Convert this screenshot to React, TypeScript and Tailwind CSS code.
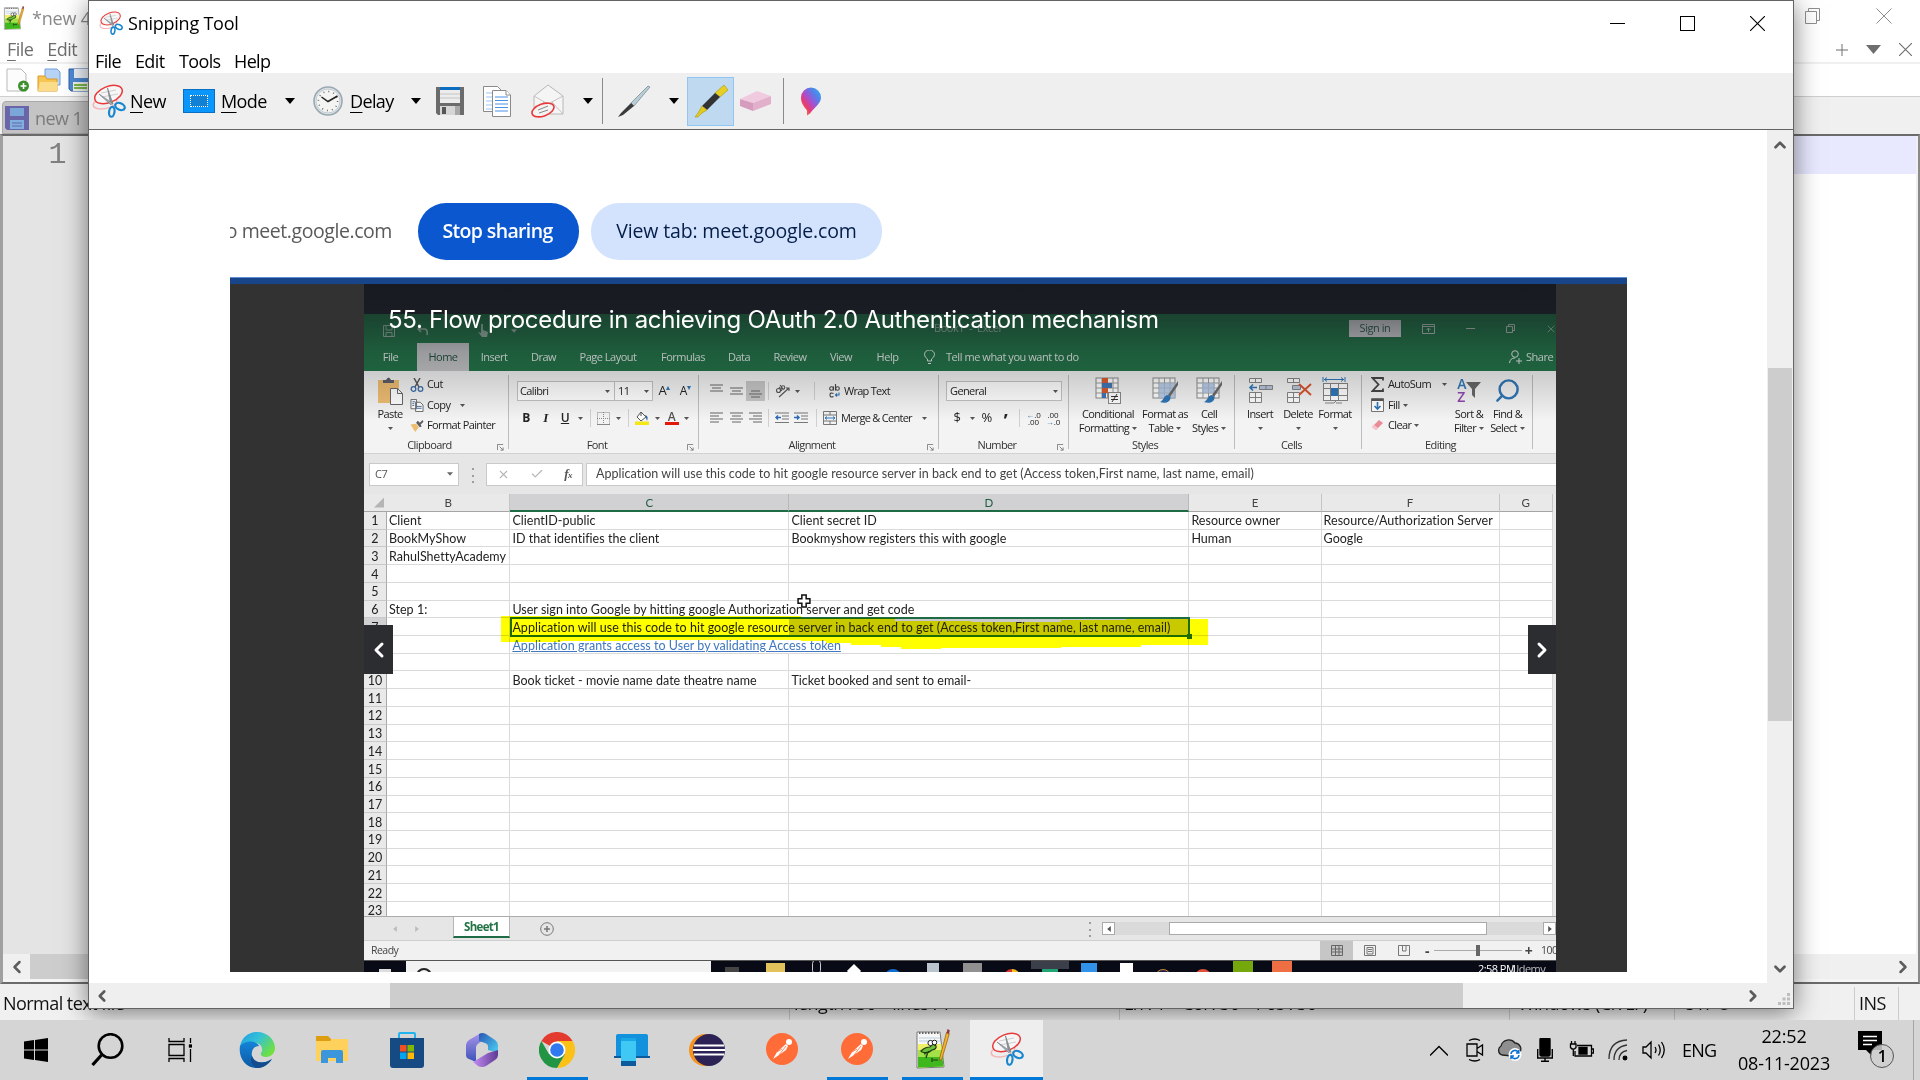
import React from "react";
import {
  ChevronLeft,
  ChevronRight,
  ChevronUp,
  ChevronDown,
  X,
  Check,
  Search,
} from "lucide-react";

type Kids = { children?: React.ReactNode; className?: string };

const Slot = ({ children, className = "" }: Kids) => (
  <div className={"flex h-full shrink-0 items-center justify-center whitespace-nowrap " + className}>{children}</div>
);

const Caret = ({ className = "" }: { className?: string }) => (
  <svg viewBox="0 0 10 6" className={"shrink-0 " + className} fill="currentColor">
    <path d="M0 0H10L5 6Z" />
  </svg>
);

const Scissors = ({ className = "" }: { className?: string }) => (
  <svg viewBox="0 0 34 34" className={"shrink-0 " + className} fill="none">
    <ellipse cx="13" cy="19" rx="12" ry="5.500" stroke="#f4b4b4" strokeWidth="1.400" transform="rotate(-12 13 19)" />
    <ellipse cx="16.500" cy="10.500" rx="14.500" ry="8" fill="#f6f6f6" stroke="#e8393b" strokeWidth="1.500" transform="rotate(-22 16.500 10.500)" />
    <path d="M9 9L24 6M10 13L26 10" stroke="#cfcfcf" />
    <path d="M15.500 4L21 20L18.500 20Z" fill="#8d949b" stroke="#70777d" strokeWidth=".6" />
    <path d="M7 10L21 19.500L18.500 20.500Z" fill="#a6adb3" stroke="#70777d" strokeWidth=".6" />
    <ellipse cx="28" cy="22.500" rx="5" ry="3.200" stroke="#1787cf" strokeWidth="2.200" transform="rotate(24 28 22.500)" />
    <ellipse cx="19.800" cy="27.800" rx="2.700" ry="5" stroke="#1787cf" strokeWidth="2.200" transform="rotate(8 19.800 27.800)" />
  </svg>
);

const Floppy = () => (
  <svg viewBox="0 0 28 28" className="h-7 w-7">
    <path d="M0 0H28V28H2L0 26Z" fill="#6b6b6b" />
    <rect x="4" y="0" width="20" height="16" fill="#ececec" />
    <rect x="4" y="0" width="20" height="3" fill="#0c6cc0" />
    <path d="M4 7H24M4 11H24" stroke="#c4c4c4" />
    <rect x="4" y="19" width="20" height="9" fill="#d6d6d6" />
    <rect x="6" y="20" width="4" height="7" fill="#565656" />
    <path d="M19 19H24V28H19Z" fill="#a8a8a8" />
  </svg>
);

const Clock = () => (
  <svg viewBox="0 0 30 30" className="h-[30px] w-[30px]">
    <circle cx="15" cy="15" r="14" fill="#dfe5e9" stroke="#9aa8b2" strokeWidth="1.600" />
    <circle cx="15" cy="15" r="12" fill="#f4f4f2" stroke="#c3ccd3" />
    <circle cx="15" cy="15" r="9.600" fill="none" stroke="#666" strokeWidth="1.500" strokeDasharray="1 4.030" />
    <path d="M8.500 11L15 15.500L24.500 10" fill="none" stroke="#222" strokeWidth="1.500" />
  </svg>
);

const Npp = ({ className = "" }: { className?: string }) => (
  <svg viewBox="0 0 34 40" className={"shrink-0 " + className}>
    <path d="M1 3H24L28 38L1 39Z" fill="#f7f7f7" stroke="#777" />
    <path d="M2 15H25.300L27.300 37.500L2 38.500Z" fill="#eef26a" />
    <path d="M2 21H26L27.300 37.500L2 38.500Z" fill="#a4e048" />
    <path d="M2 28H26.500L27.300 37.500L2 38.500Z" fill="#3fb81e" />
    <path d="M3 4H24" stroke="#666" strokeWidth="2" strokeDasharray="1.500 1.500" />
    <path d="M3 9H24M3 12H24" stroke="#b9cfe0" />
    <path d="M5 22Q9 18 14 18L17 15L20 17Q21 20 16 21Q12 25 6 23ZM8 25L12 23L10 29M17 31H22M16 29V33" fill="#6cc03a" stroke="#1d3b12" strokeWidth="1.200" />
    <circle cx="14.500" cy="14" r="2.600" fill="#fff" stroke="#222" />
    <circle cx="18.500" cy="13.500" r="2.300" fill="#fff" stroke="#222" />
    <path d="M30.500 3.500L33.300 4.800L26 29.500L23.500 32L23.800 28.500Z" fill="#f5b32c" stroke="#8a5a10" strokeWidth=".7" />
    <path d="M31.500 0L33.800 1.200L33 5L30.500 4Z" fill="#8e3b39" />
  </svg>
);

/* ---------- Notepad++ window behind ---------- */

const NotepadWindow = () => (
  <div className="absolute top-0 left-0 flex h-[1020px] w-[1920px] flex-col bg-white text-[18px] tracking-[-0.03em] text-[#6e6e6e]">
    <div className="flex h-8 items-center justify-between pl-[3px]">
      <div className="flex items-center gap-[7px] text-[#8a8a8a]">
        <Npp className="mt-1 h-6 w-[22px]" />
        <span className="pt-1 tracking-[-0.01em]">*new 4</span>
      </div>
      <div className="flex h-full items-center pr-px text-[#8f8f8f]">
        <Slot className="w-[71px]">
          <svg viewBox="0 0 16 16" className="h-4 w-4" fill="none" stroke="currentColor">
            <path d="M.500 3.500H11.500V15.500H.500ZM3.500 3.500V.500H14.500V12.500H11.500" />
          </svg>
        </Slot>
        <Slot className="w-[71px]">
          <svg viewBox="0 0 16 16" className="h-4 w-4" fill="none" stroke="currentColor">
            <path d="M.500 .500L15.500 15.500M15.500 .500L.500 15.500" />
          </svg>
        </Slot>
      </div>
    </div>
    <div className="flex h-[30px] items-center justify-between pr-[8px] pl-[7px]">
      <div className="flex gap-[14px] pt-1">
        <span><u className="decoration-1 underline-offset-4">F</u>ile</span>
        <span><u className="decoration-1 underline-offset-4">E</u>dit</span>
      </div>
      <div className="flex items-center gap-[18px] pt-[5px]">
        <svg viewBox="0 0 12 12" className="h-3 w-3" stroke="currentColor"><path d="M6 0V12M0 6H12" /></svg>
        <Caret className="h-[13px] w-[15px]" />
        <svg viewBox="0 0 12 12" className="h-[13px] w-[13px]" stroke="currentColor"><path d="M0 0L12 12M12 0L0 12" /></svg>
      </div>
    </div>
    <div className="flex h-[34px] items-center gap-[7px] border-t-2 border-[#f0f0f0] pl-1.5">
      <svg viewBox="0 0 24 24" className="h-6 w-6">
        <path d="M1 1H15L20 6V23H1Z" fill="#fcfcfc" stroke="#b9b9b9" />
        <circle cx="17.500" cy="18" r="5.500" fill="#3c8f2d" />
        <path d="M17.500 15V21M14.500 18H20.500" stroke="#fff" strokeWidth="1.600" />
      </svg>
      <svg viewBox="0 0 24 24" className="h-6 w-6">
        <path d="M8 1H20L23 4V17H8Z" fill="#b8d4f5" stroke="#6f9fdc" />
        <path d="M1 8H8L10 11H20V23H1Z" fill="#f7c552" stroke="#d99a2b" />
        <path d="M3 14H21L20 23H1Z" fill="#fbdc8a" />
      </svg>
      <svg viewBox="0 0 24 24" className="h-6 w-6">
        <path d="M1 1H23V23H3L1 21Z" fill="#4f8ad6" stroke="#2f62a8" />
        <rect x="6" y="1" width="14" height="9" fill="#eef4fb" />
        <rect x="5" y="14" width="15" height="9" fill="#f3f8ee" />
        <path d="M6 17H19M6 20H19" stroke="#7dbb4e" strokeWidth="2" />
      </svg>
    </div>
    <div className="flex h-[38px] border-t border-[#cfcfcf] bg-[#f0f0f0]">
      <div className="mt-1 ml-0.5 flex w-24 items-center gap-[6px] rounded-t border border-[#a9a9a9] bg-[#c4c4c4] pt-px pl-0.5 text-[18px] text-[#7c7c7c]">
        <svg viewBox="0 0 24 24" className="h-6 w-6">
          <path d="M0 0H24V24H2L0 22Z" fill="#6a64a8" />
          <rect x="5" y="2" width="14" height="8" fill="#7ba6d8" />
          <rect x="5" y="14" width="14" height="9" fill="#7fb0e0" />
          <path d="M7 17H17M7 20H17" stroke="#6a64a8" />
        </svg>
        new 1
      </div>
    </div>
    <div className="flex flex-1 flex-col border-t-2 border-r-2 border-b-2 border-l-[3px] border-[#6b6b6b] border-r-[#8a8a8a] border-l-[#a0a0a0]">
      <div className="flex flex-1">
        <div className="w-[85px] bg-[#e4e4e4] pt-[1px] pr-[22px] text-right font-['Liberation_Mono',monospace] text-[30px] leading-[36px] text-[#808080]">1</div>
        <div className="flex-1 border-r-2 border-[#f0f0f0]">
          <div className="h-[38px] bg-[#e8e8ff]" />
        </div>
      </div>
      <div className="flex h-[25px] items-center bg-[#f0f0f0]">
        <Slot className="w-[27px]"><ChevronLeft className="h-5 w-5 text-[#5d5d5d]" strokeWidth={3} /></Slot>
        <div className="h-full w-[1300px] bg-[#cdcdcd]" />
        <div className="flex-1" />
        <Slot className="w-[30px]"><ChevronRight className="h-5 w-5 text-[#5d5d5d]" strokeWidth={3} /></Slot>
      </div>
      <div className="h-[3px] bg-[#f5f5f5]" />
    </div>
    <div className="flex h-9 items-center bg-[#f0f0f0] pt-[3px] text-[18px] text-[#111]">
      <span className="w-[789px] pl-[3px]">Normal text file</span>
      <span className="flex h-full w-[330px] items-center border-l border-[#ccc] pl-1">length : 36&nbsp;&nbsp;&nbsp; lines : 1</span>
      <span className="flex h-full w-[390px] items-center border-l border-[#ccc] pl-1">Ln : 1&nbsp;&nbsp;&nbsp; Col : 36&nbsp;&nbsp;&nbsp; Pos : 36</span>
      <span className="flex h-full w-[165px] items-center border-l border-[#ccc] pl-2">Windows (CR LF)</span>
      <span className="flex h-full w-[180px] items-center border-l border-[#ccc] pl-2">UTF-8</span>
      <span className="flex h-full w-[45px] items-center border-x border-[#ccc] pl-1">INS</span>
    </div>
  </div>
);

/* ---------- Excel recording ---------- */

const tabs: [string, string][] = [
  ["File", "w-[53px]"],
  ["Home", "w-[52px] bg-[#c6c6c8] text-[#1d4f3a]"],
  ["Insert", "w-[50px]"],
  ["Draw", "w-[49px]"],
  ["Page Layout", "w-[80px]"],
  ["Formulas", "w-[70px]"],
  ["Data", "w-[42px]"],
  ["Review", "w-[60px]"],
  ["View", "w-[42px]"],
  ["Help", "w-[51px]"],
];

const Launcher = () => (
  <svg viewBox="0 0 8 8" className="h-[7px] w-[7px]" fill="none" stroke="#777"><path d="M.500 7V.500H7M3 3L7 7M7 4V7H4" /></svg>
);

const Group = ({ label, width, launcher, children }: { label: string; width: string; launcher?: boolean; children: React.ReactNode }) => (
  <div className={"relative flex shrink-0 flex-col " + width}>
    <div className="flex h-[66px]">{children}</div>
    <div className="flex h-[17px] items-center justify-center pt-0.5 pr-[14px] text-[#333]">{label}</div>
    {launcher && <div className="absolute right-[5px] bottom-[2px]"><Launcher /></div>}
    <div className="absolute top-[4px] right-0 h-[74px] w-px bg-[#bdbdbd]" />
  </div>
);

const Lines = ({ kind }: { kind: "l" | "c" | "r" | "top" | "mid" | "bot" }) => {
  const d = {
    l: "M0 1H13M0 4H9M0 7H13M0 10H9",
    c: "M0 1H13M2 4H11M0 7H13M2 10H11",
    r: "M0 1H13M4 4H13M0 7H13M4 10H13",
    top: "M0 0H13M2 3H11M0 6H13",
    mid: "M0 3H13M2 6H11M0 9H13",
    bot: "M2 6H11M0 9H13M2 12H11",
  }[kind];
  return <svg viewBox="0 0 13 12" className="h-3 w-[13px] overflow-visible" stroke="#666" strokeWidth="1.100"><path d={d} /></svg>;
};

const Indent = ({ flip }: { flip?: boolean }) => (
  <svg viewBox="0 0 14 12" className="h-3 w-[14px]" fill="none">
    <path d="M0 1H14M7 4H14M7 7H14M0 10.500H14" stroke="#777" />
    <path d={flip ? "M0 5.500H5M3 3.500L5 5.500L3 7.500" : "M6 5.500H1M3 3.500L1 5.500L3 7.500"} stroke="#2b6cb5" strokeWidth="1.500" />
  </svg>
);

const Arr = () => <Caret className="h-[3px] w-[5px] text-[#555]" />;
const Sep = () => <div className="h-[18px] w-px bg-[#d0d0d0]" />;

const TableIcon = ({ kind }: { kind: "cond" | "table" | "cell" }) => (
  <svg viewBox="0 0 27 27" className="h-[27px] w-[27px]" fill="none">
    <rect x="1" y="1" width="22" height="20" fill="#fff" stroke="#8a8a8a" />
    <path d="M1 6H23M1 11H23M1 16H23M7 1V21M12.500 1V21M18 1V21" stroke="#9a9a9a" />
    {kind === "cond" && (
      <>
        <path d="M7 1H13V6H7ZM7 11H13V16H7Z" fill="#d95a2b" />
        <path d="M7 6H17V11H7ZM7 16H11V21H7Z" fill="#3f76b5" />
        <rect x="13.500" y="15.500" width="12" height="11" fill="#fff" stroke="#888" />
        <path d="M16 19.500H23M16 22.500H23M22 17L17 25" stroke="#333" />
      </>
    )}
    {kind !== "cond" && (
      <>
        <path d={kind === "table" ? "M7 6H23V21H7Z" : "M6 6H19V16H6Z"} fill="#a9bfdf" fillOpacity=".8" />
        <path d="M26 4L16 18L18 20L26 8Z" fill="#6b6b6b" />
        <path d="M16 18C12 18 12 23 8 25C13 27 19 25 18.500 20Z" fill="#2e75b6" />
      </>
    )}
  </svg>
);

const CellsIcon = ({ kind }: { kind: "ins" | "del" | "fmt" }) => (
  <svg viewBox="0 0 27 27" className="h-[27px] w-[27px]" fill="none" stroke="#858585">
    {kind === "fmt" ? (
      <>
        <rect x="1.500" y="6.500" width="24" height="17" fill="#fff" />
        <path d="M1.500 11.500H25.500M1.500 18.500H25.500M8.500 6.500V23.500M16.500 6.500V23.500M3 26H12L14 24M14 26H20" />
        <rect x="9" y="11" width="7" height="8" fill="#2e75b6" stroke="none" />
        <path d="M2 2.500H22M1 0V5M23 0V5M5 .500L2.500 2.500L5 4.500M19 .500L21.500 2.500L19 4.500" stroke="#2e75b6" />
      </>
    ) : (
      <>
        <path d="M2.500 1.500H14.500V5.500H2.500ZM8.500 1.500V5.500M2.500 15.500H14.500V25.500H2.500ZM8.500 15.500V25.500M2.500 20.500H14.500" fill="#fff" />
        <path d={kind === "ins" ? "M12.500 8.500H25.500V12.500H12.500ZM19 8.500V12.500" : "M7.500 8.500H15.500V12.500H7.500Z"} fill="#b9c7dc" />
        {kind === "ins" ? (
          <path d="M10 10.500H3M6 7.500L3 10.500L6 13.500" stroke="#2e75b6" strokeWidth="1.600" />
        ) : (
          <path d="M14 7L26 18M26 7L14 18" stroke="#d9532c" strokeWidth="2" />
        )}
      </>
    )}
  </svg>
);

const BigButton = ({ icon, a, b, width, caretOnly }: { icon: React.ReactNode; a: string; b?: string; width: string; caretOnly?: boolean }) => (
  <div className={"flex shrink-0 flex-col items-center pt-[6px] whitespace-nowrap " + width}>
    <div className="flex h-[30px] items-start justify-center">{icon}</div>
    <span className="h-[14px] leading-[14px]">{a}</span>
    <span className="flex h-[14px] items-center gap-[3px] leading-[14px]">
      {!caretOnly && b}
      <Arr />
    </span>
  </div>
);

const Ribbon = () => (
  <div className="flex h-[83px] shrink-0 border-b border-[#d2d2d2] bg-[#f3f3f3] text-[11px] tracking-[-0.055em] text-[#222]">
    <Group label="Clipboard" width="w-[145px]" launcher>
      <BigButton
        width="w-[46px] pl-[6px]"
        caretOnly
        a="Paste"
        icon={
          <svg viewBox="0 0 27 29" className="h-[29px] w-[27px]">
            <rect x="1" y="3" width="21" height="23" fill="#eebd70" />
            <path d="M6 6V3H9Q11.500 -2 14 3H17V6Z" fill="#5c5c66" />
            <path d="M13.500 11.500H20.500L25.500 16.500V27.500H13.500Z" fill="#fff" stroke="#666" />
            <path d="M20.500 11.500V16.500H25.500" fill="none" stroke="#666" />
          </svg>
        }
      />
      <div className="flex flex-col pt-[3px]">
        <div className="flex h-[21px] items-center gap-[3px]">
          <svg viewBox="0 0 14 14" className="h-[14px] w-[14px]" fill="none">
            <path d="M4 0L9 9M10 0L5 9" stroke="#555" strokeWidth="1.500" />
            <circle cx="3.500" cy="11" r="2.300" stroke="#3c6ea8" strokeWidth="1.300" />
            <circle cx="10.500" cy="11" r="2.300" stroke="#3c6ea8" strokeWidth="1.300" />
          </svg>
          Cut
        </div>
        <div className="flex h-[20px] items-center gap-[3px]">
          <svg viewBox="0 0 14 14" className="h-[13px] w-[14px]" fill="#fff" stroke="#666">
            <path d="M.500 .500H6.500V10.500H.500ZM5.500 3.500H10.500L13.500 6.500V13.500H5.500Z" />
            <path d="M7 8H12M7 10H12M2 3H5M2 5H4M2 7H4" stroke="#3c6ea8" />
          </svg>
          Copy <span className="w-1" /><Arr />
        </div>
        <div className="flex h-[20px] items-center gap-[3px]">
          <svg viewBox="0 0 14 14" className="h-[13px] w-[14px]">
            <path d="M0 6L6 5L9 9L5 14Z" fill="#eebd70" />
            <path d="M6 4L8 2L10 4L13 1L14 3L11 6L12 8L10 9Z" fill="#5c5c5c" />
          </svg>
          Format Painter
        </div>
      </div>
    </Group>
    <Group label="Font" width="w-[190px]" launcher>
      <div className="flex flex-col pt-[10px] pl-2">
        <div className="flex h-5 items-center">
          <div className="flex h-full w-[98px] items-center justify-between border border-[#c3c3c3] bg-white px-[2px] pr-1">Calibri <Arr /></div>
          <div className="flex h-full w-[38px] items-center justify-between border border-l-0 border-[#c3c3c3] bg-white px-[3px]">11 <Arr /></div>
          <Slot className="w-[22px] text-[13px]">A<span className="mb-2 text-[8px] text-[#2e75b6]">▴</span></Slot>
          <Slot className="w-[20px] text-[12px]">A<span className="mb-2 text-[8px] text-[#2e75b6]">▾</span></Slot>
        </div>
        <div className="mt-[6px] flex h-[22px] items-center">
          <Slot className="w-[18px] text-[12px] font-bold">B</Slot>
          <Slot className="w-[21px] font-['Liberation_Serif',serif] text-[13px] font-bold italic">I</Slot>
          <Slot className="w-[18px] text-[12px] font-semibold underline">U</Slot>
          <Slot className="w-[12px]"><Arr /></Slot>
          <Slot className="w-[8px]"><Sep /></Slot>
          <Slot className="w-[19px]">
            <svg viewBox="0 0 13 13" className="h-[13px] w-[13px]" fill="none" stroke="#888"><path d="M.500 .500H12.500V12.500H.500ZM6.500 0V13M0 6.500H13" strokeDasharray="1 1" /><path d="M0 12.500H13" /></svg>
          </Slot>
          <Slot className="w-[11px]"><Arr /></Slot>
          <Slot className="w-[9px]"><Sep /></Slot>
          <Slot className="w-[18px]">
            <svg viewBox="0 0 14 14" className="h-[14px] w-[14px]" fill="none"><path d="M6 1L11 6L6 10L2 6ZM6 1V5" fill="#fff" stroke="#555" /><path d="M10 4Q14 5 12 10Z" fill="#2e6aa5" /><rect y="10.500" width="14" height="3.500" fill="#f5e616" /></svg>
          </Slot>
          <Slot className="w-[12px]"><Arr /></Slot>
          <Slot className="w-[17px]">
            <div className="flex flex-col items-center"><span className="h-[11px] text-[12px] leading-[11px] font-semibold text-[#555]">A</span><span className="h-[3px] w-[14px] bg-[#e3170a]" /></div>
          </Slot>
          <Slot className="w-[12px]"><Arr /></Slot>
        </div>
      </div>
    </Group>
    <Group label="Alignment" width="w-[240px]" launcher>
      <div className="flex flex-col pt-[10px] pl-[7px]">
        <div className="flex h-5 items-center">
          <Slot className="w-[20px]"><Lines kind="top" /></Slot>
          <Slot className="w-[20px]"><Lines kind="mid" /></Slot>
          <Slot className="w-[19px] bg-[#c6c6c6]"><Lines kind="bot" /></Slot>
          <Slot className="w-[7px]"><Sep /></Slot>
          <Slot className="w-[21px]">
            <svg viewBox="0 0 16 14" className="h-[14px] w-4" fill="none" stroke="#555" strokeWidth="1.100">
              <circle cx="3.500" cy="6.500" r="2" /><path d="M4 3L7 7" /><path d="M5 1L8.500 5.500" /><circle cx="8" cy="3.500" r="1.800" /><path d="M4 13L14 4M11 4H14V7" />
            </svg>
          </Slot>
          <Slot className="w-[8px]"><Arr /></Slot>
          <Slot className="w-[26px]"><Sep /></Slot>
          <Slot className="w-[14px]">
            <svg viewBox="0 0 11 14" className="h-[14px] w-[11px]" fill="none" stroke="#444" strokeWidth="1.100">
              <circle cx="2.500" cy="4.500" r="1.800" /><path d="M4.500 2.500V6.500M6.500 0V6.500" /><circle cx="8.500" cy="4.500" r="1.800" /><path d="M4.500 9.500Q1 8 1 11Q1 14 4.500 12.500" /><path d="M10 8.500V11H6.500M8 9.500L6.500 11L8 12.500" stroke="#2e75b6" />
            </svg>
          </Slot>
          <span className="pl-[3px] tracking-[-0.065em]">Wrap Text</span>
        </div>
        <div className="mt-[6px] flex h-[22px] items-center">
          <Slot className="w-[20px]"><Lines kind="l" /></Slot>
          <Slot className="w-[20px]"><Lines kind="c" /></Slot>
          <Slot className="w-[19px]"><Lines kind="r" /></Slot>
          <Slot className="w-[7px]"><Sep /></Slot>
          <Slot className="w-[19px]"><Indent /></Slot>
          <Slot className="w-[19px]"><Indent flip /></Slot>
          <Slot className="w-[12px]"><Sep /></Slot>
          <Slot className="w-[16px]">
            <svg viewBox="0 0 14 14" className="h-[14px] w-[14px]" fill="none" stroke="#777"><path d="M.500 .500H13.500V13.500H.500ZM.500 4H13.500M.500 10H13.500M7 .500V4M7 10V13.500" /><path d="M2 7H12M4 5.500L2 7L4 8.500M10 5.500L12 7L10 8.500" stroke="#2e75b6" /></svg>
          </Slot>
          <span className="w-[84px] pl-[3px] tracking-[-0.065em] whitespace-nowrap">Merge &amp; Center</span>
          <Arr />
        </div>
      </div>
    </Group>
    <Group label="Number" width="w-[130px]" launcher>
      <div className="flex flex-col pt-[10px] pl-[7px]">
        <div className="flex h-5 w-[116px] items-center justify-between border border-[#c3c3c3] bg-white px-[3px]">General <Arr /></div>
        <div className="mt-[6px] flex h-[22px] items-center text-[13px] font-medium">
          <Slot className="w-[22px]">$</Slot>
          <Slot className="w-[9px]"><Arr /></Slot>
          <Slot className="w-[19px]">%</Slot>
          <Slot className="w-[19px] pt-1 text-[18px] font-bold">’</Slot>
          <Slot className="w-[9px]"><Sep /></Slot>
          <Slot className="w-[19px] flex-col text-[8px] leading-[7px] tracking-normal"><span><span className="text-[#2e75b6]">←</span>.0</span><span>.00</span></Slot>
          <Slot className="w-[20px] flex-col text-[8px] leading-[7px] tracking-normal"><span>.00</span><span><span className="text-[#2e75b6]">→</span>.0</span></Slot>
        </div>
      </div>
    </Group>
    <Group label="Styles" width="w-[166px]">
      <BigButton width="w-[76px] pl-[2px]" icon={<TableIcon kind="cond" />} a="Conditional" b="Formatting" />
      <BigButton width="w-[40px]" icon={<TableIcon kind="table" />} a="Format as" b="Table" />
      <BigButton width="w-[48px]" icon={<TableIcon kind="cell" />} a="Cell" b="Styles" />
    </Group>
    <Group label="Cells" width="w-[127px]">
      <BigButton width="w-[50px]" icon={<CellsIcon kind="ins" />} a="Insert" caretOnly />
      <BigButton width="w-[26px]" icon={<CellsIcon kind="del" />} a="Delete" caretOnly />
      <BigButton width="w-[48px]" icon={<CellsIcon kind="fmt" />} a="Format" caretOnly />
    </Group>
    <Group label="Editing" width="w-[171px]">
      <div className="flex w-[87px] flex-col pt-[3px] pl-[9px]">
        <div className="flex h-[21px] items-center">
          <svg viewBox="0 0 13 15" className="mr-[4px] h-[15px] w-[13px]" fill="none" stroke="#444" strokeWidth="1.800"><path d="M12 3.500V1H1.500L7.500 7.500L1.500 14H12V11.500" /></svg>
          <span className="w-[54px]">AutoSum</span><Arr />
        </div>
        <div className="flex h-[20px] items-center">
          <svg viewBox="0 0 13 14" className="mr-[4px] h-[14px] w-[13px]" fill="none"><path d="M.500 .500H12.500V13.500H.500Z" fill="#fff" stroke="#777" /><path d="M.500 2H12.500" stroke="#555" strokeWidth="2" /><path d="M6.500 4V11M3.500 8L6.500 11L9.500 8" stroke="#2e75b6" strokeWidth="1.600" /></svg>
          <span className="pr-[3px]">Fill</span><Arr />
        </div>
        <div className="flex h-[20px] items-center">
          <svg viewBox="0 0 13 12" className="mr-[4px] h-[12px] w-[13px]"><path d="M1 8L8 1L12 4L5 11Z" fill="#ea8c98" /><path d="M1 8L3 6L7 9L5 11Z" fill="#f6c6cc" /></svg>
          <span className="pr-[3px]">Clear</span><Arr />
        </div>
      </div>
      <BigButton
        width="w-[40px]"
        a="Sort &amp;"
        b="Filter"
        icon={
          <div className="flex items-center">
            <span className="flex flex-col text-[14px] leading-[13px] font-semibold text-[#2e75b6]">A<span className="text-[#8e44ad]">Z</span></span>
            <svg viewBox="0 0 15 16" className="h-4 w-[15px]" fill="#666"><path d="M0 0H15L9 7V16L6 13V7Z" /></svg>
          </div>
        }
      />
      <BigButton width="w-[37px]" a="Find &amp;" b="Select" icon={<Search className="h-[27px] w-[27px] -scale-x-100 text-[#2e75b6]" strokeWidth={2.2} />} />
    </Group>
  </div>
);

const colWidths = {
  B: "w-[123.4px]",
  C: "w-[279px]",
  D: "w-[400px]",
  E: "w-[132.2px]",
  F: "w-[178px]",
  G: "w-[53.4px]",
};
type Col = keyof typeof colWidths;
const cols = Object.keys(colWidths) as Col[];

const data: Record<number, Partial<Record<Col, string>>> = {
  1: { B: "Client", C: "ClientID-public", D: "Client secret ID", E: "Resource owner", F: "Resource/Authorization Server" },
  2: { B: "BookMyShow", C: "ID that identifies the client", D: "Bookmyshow registers this with google", E: "Human", F: "Google" },
  3: { B: "RahulShettyAcademy" },
  6: { B: "Step 1:", C: "User sign into Google by hitting google Authorization server and get code" },
  7: { C: "Application will use this code to hit google resource server in back end to get (Access token,First name, last name, email)" },
  8: { C: "Application grants access to User by validating Access token" },
  10: { C: "Book ticket - movie name date theatre name", D: "Ticket booked and sent to email-" },
};

const Grid = () => (
  <div className="flex h-[422px] w-full shrink-0 flex-col overflow-hidden bg-[#e9e9ea] font-['Lato',sans-serif] text-[12.500px] tracking-[0.002em] text-[#222]">
    <div className="flex h-[18px] shrink-0 text-[11.500px] text-[#444]">
      <div className="flex w-[23px] shrink-0 items-end justify-end border-b border-[#a5a5a5] p-[3px]">
        <svg viewBox="0 0 10 10" className="h-[11px] w-[10px]" fill="#b5b5b5"><path d="M10 0V10H0Z" /></svg>
      </div>
      {cols.map((c) => (
        <div
          key={c}
          className={
            "flex shrink-0 items-center justify-center border-r pt-px " +
            colWidths[c] +
            (c === "C" || c === "D" ? " border-b-2 border-r-[#b8b8b8] border-b-[#1e6b45] bg-[#d1d1d3] text-[#1f5c43]" : " border-b border-r-[#c5c5c5] border-b-[#a5a5a5]")
          }
        >
          {c}
        </div>
      ))}
    </div>
    {Array.from({ length: 23 }, (_, i) => i + 1).map((r) => (
      <div key={r} className="flex h-[17.730px] shrink-0">
        <div className={"flex w-[23px] shrink-0 items-center justify-center border-r border-b border-r-[#a9a9a9] border-b-[#c9c9c9] pt-[3px] " + (r === 7 ? "bg-[#d1d1d3]" : "")}>
          {r}
        </div>
        {cols.map((c) => {
          const spill = c === "C" && r >= 6 && r <= 8;
          return (
            <div
              key={c}
              className={
                "relative flex shrink-0 items-center border-b border-b-[#dadada] bg-white pt-[3px] pl-[2px] whitespace-nowrap " +
                colWidths[c] +
                (spill ? " z-10" : " border-r border-r-[#dadada]") +
                (r === 8 && c === "C" ? " text-[#3f78c0] underline decoration-1" : "") +
                (r === 7 && c === "D" ? " bg-[#c9c9cb]!" : "")
              }
            >
              {data[r]?.[c]}
            </div>
          );
        })}
      </div>
    ))}
  </div>
);

const ExcelRecording = () => (
  <div className="relative flex h-[688px] w-[1192px] shrink-0 flex-col overflow-hidden bg-[#e6e6e7] font-['Open_Sans',sans-serif]">
    <div className="h-[30px] shrink-0 bg-[#20242b]" />
    <div className="flex h-[57px] shrink-0 flex-col bg-[#217346]">
      <div className="flex h-[29px] items-center text-[11px] tracking-[-0.04em] text-[#b8c5be]">
        <div className="flex w-[570px] shrink-0 items-center gap-[22px] pt-1 pl-[19px] opacity-80">
          <svg viewBox="0 0 12 12" className="h-3 w-3" fill="none" stroke="currentColor"><path d="M.500 .500H11.500V11.500H.500ZM3 .500V5H9V.500M3 11.500V7.500H9V11.500" /></svg>
          <svg viewBox="0 0 12 10" className="h-[10px] w-3" fill="none" stroke="currentColor" strokeWidth="1.500"><path d="M1 3H8Q11 4 10 9M4 0L1 3L4 6" /></svg>
          <span className="w-1" />
          <svg viewBox="0 0 12 14" className="h-[14px] w-3" fill="currentColor"><path d="M4 0H6V6L11 8L10 13H5L1 8L4 9Z" /></svg>
          <Caret className="h-1 w-[6px]" />
        </div>
        <span className="w-[415px] shrink-0 opacity-80">Book1&nbsp; - &nbsp;Excel</span>
        <div className="flex h-[17px] w-[52px] shrink-0 items-center justify-center bg-[#d4d4d6] text-[#2d5c48]">Sign in</div>
        <Slot className="w-[55px]">
          <svg viewBox="0 0 13 10" className="h-[10px] w-[13px]" fill="none" stroke="currentColor"><path d="M.500 .500H12.500V9.500H.500ZM.500 2.500H12.500M6.500 8V4M4.500 6L6.500 4L8.500 6" /></svg>
        </Slot>
        <Slot className="w-[29px]"><span className="h-px w-[9px] bg-current" /></Slot>
        <Slot className="w-[51px]">
          <svg viewBox="0 0 9 9" className="h-[9px] w-[9px]" fill="none" stroke="currentColor"><path d="M.500 2.500H6.500V8.500H.500ZM2.500 2.500V.500H8.500V6.500H6.500" /></svg>
        </Slot>
        <Slot className="w-[30px]"><X className="h-3 w-3" strokeWidth={1.5} /></Slot>
      </div>
      <div className="flex h-[28px] items-center text-[11px] tracking-[-0.045em] text-[#e6eeea]">
        {tabs.map(([t, w]) => (
          <Slot key={t} className={w}>{t}</Slot>
        ))}
        <Slot className="w-[33px]">
          <svg viewBox="0 0 11 15" className="h-[15px] w-[11px]" fill="none" stroke="currentColor"><path d="M3.500 11V9Q.500 7 .500 4.500A5 4.500 0 0 1 10.500 4.500Q10.500 7 7.500 9V11ZM4 13.500H7" /></svg>
        </Slot>
        <span className="w-[563px] shrink-0 tracking-[-0.04em]">Tell me what you want to do</span>
        <svg viewBox="0 0 13 14" className="mr-1 h-[14px] w-[13px] shrink-0" fill="none" stroke="currentColor"><circle cx="6" cy="4" r="3.300" /><path d="M.500 13Q1 8 6 8M7 11H13M10 8V14" /></svg>
        Share
      </div>
    </div>
    <Ribbon />
    <div className="flex h-[40px] shrink-0 items-center bg-[#e6e6e7]">
      <div className="ml-[5px] flex h-[23px] w-[90px] items-center justify-between border border-[#c9c9c9] bg-white px-[5px] text-[11px] tracking-[-0.04em] text-[#555]">C7 <Caret className="h-1 w-[6px] text-[#666]" /></div>
      <Slot className="w-[27px] text-[#999]">⋮</Slot>
      <div className="flex h-[23px] w-[97px] items-center justify-around border border-[#c9c9c9] bg-white text-[#b5b5b5]">
        <X className="h-[13px] w-[13px]" />
        <Check className="h-[14px] w-[14px]" />
        <span className="font-['Liberation_Serif',serif] text-[13px] font-bold text-[#555] italic">f<span className="text-[9px]">x</span></span>
      </div>
      <div className="ml-[3px] flex h-[23px] flex-1 items-center border border-r-0 border-[#c9c9c9] bg-white pt-px pl-[9px] font-['Lato',sans-serif] text-[12.500px] tracking-[0.002em] whitespace-nowrap text-[#444]">
        {data[7].C}
      </div>
    </div>
    <Grid />
    <div className="flex h-[24px] shrink-0 items-center border-t border-[#ababab] text-[#bbb]">
      <div className="flex w-[89px] shrink-0 justify-center gap-[16px] pr-[6px]">
        <Caret className="h-1 w-[6px] rotate-90" /><Caret className="h-1 w-[6px] -rotate-90" />
      </div>
      <div className="flex h-[21px] w-[57px] shrink-0 items-center justify-center self-start border-x border-b-2 border-[#b5b5b5] border-b-[#1e6b45] bg-white pt-px text-[11.500px] font-bold tracking-[-0.06em] text-[#217346]">Sheet1</div>
      <Slot className="w-[73px]">
        <svg viewBox="0 0 14 14" className="h-[14px] w-[14px]" fill="none" stroke="#777"><circle cx="7" cy="7" r="6.300" /><path d="M7 4V10M4 7H10" strokeWidth="1.500" /></svg>
      </Slot>
      <Slot className="ml-[497px] w-[19px] text-[#999]">⋮</Slot>
      <div className="ml-[3px] flex h-[13px] w-[454px] shrink-0 items-stretch bg-[#dadada]">
        <span className="flex w-[13px] items-center justify-center border border-[#aaa] bg-white"><Caret className="h-1 w-[6px] rotate-90 text-[#555]" /></span>
        <span className="ml-[54px] w-[318px] border border-[#aaa] bg-white" />
        <span className="flex-1" />
        <span className="flex w-[13px] items-center justify-center border border-[#aaa] bg-white"><Caret className="h-1 w-[6px] -rotate-90 text-[#555]" /></span>
      </div>
    </div>
    <div className="flex h-[20px] shrink-0 items-center border-t border-[#cfcfcf] bg-[#f1f1f1] text-[10.500px] tracking-[-0.05em] text-[#444]">
      <span className="w-[956px] shrink-0 pl-[7px]">Ready</span>
      <Slot className="w-[33px] bg-[#c6c6c6]">
        <svg viewBox="0 0 12 11" className="h-[11px] w-3" fill="none" stroke="#666"><path d="M.500 .500H11.500V10.500H.500ZM4.500 0V11M8 0V11M0 4H12M0 7H12" /></svg>
      </Slot>
      <Slot className="w-[34px]">
        <svg viewBox="0 0 12 11" className="h-[11px] w-3" fill="none" stroke="#777"><path d="M.500 .500H11.500V10.500H.500ZM3 2.500H9V9H3ZM4 4.500H8M4 6.500H8" /></svg>
      </Slot>
      <Slot className="w-[33px]">
        <svg viewBox="0 0 12 11" className="h-[11px] w-3" fill="none" stroke="#777"><path d="M.500 .500H11.500V10.500H.500ZM4.500 0V6H8V0" /></svg>
      </Slot>
      <Slot className="w-[14px] text-[14px] font-bold">-</Slot>
      <div className="flex h-full w-[88px] shrink-0 items-center justify-center bg-[linear-gradient(#aaa,#aaa)] bg-[size:100%_1px] bg-center bg-no-repeat"><span className="h-[11px] w-[4px] bg-[#666]" /></div>
      <Slot className="w-[13px] text-[14px] font-bold">+</Slot>
      <span className="pl-[6px]">100</span>
    </div>
    <div className="flex h-[12px] shrink-0 items-start overflow-hidden border-t border-[#555] bg-[#080b16]">
      <Slot className="w-[42px]"><span className="mt-[9px] h-1 w-[12px] bg-[#ddd]" /></Slot>
      <div className="flex h-full w-[305px] shrink-0 items-start overflow-hidden bg-[#f2f2f2] pt-[7px] pl-[10px]"><span className="h-4 w-4 rounded-full border-2 border-[#222]" /></div>
      <div className="flex h-full items-start pt-[8px]">
        <Slot className="w-[42px]"><span className="mt-1 h-3 w-[14px] bg-[#444]" /></Slot>
        <Slot className="w-[44px]"><span className="h-4 w-[19px] bg-[#e3c25c]" /></Slot>
        <Slot className="w-[38px]"><span className="-mt-2 h-4 w-[9px] rounded-full border border-[#ccc]" /></Slot>
        <Slot className="w-[38px]"><span className="h-2.5 w-2.5 rotate-45 bg-white" /></Slot>
        <Slot className="w-[40px] items-start"><span className="h-4 w-4 shrink-0 rounded-full bg-[#0d6fd1]" /></Slot>
        <Slot className="w-[40px]"><span className="h-4 w-3 bg-[#b9c4cc]" /></Slot>
        <Slot className="w-[39px]"><span className="h-4 w-[19px] bg-[#909090]" /></Slot>
        <Slot className="w-[39px] items-start"><span className="h-4 w-4 rounded-full bg-[conic-gradient(#f4c022_40%,#1a62b8_40%,#1a62b8_70%,#d9362b_70%)]" /></Slot>
        <Slot className="-mt-2 h-4 w-[38px] items-start bg-[#3a3f49] pt-2"><span className="h-4 w-4 bg-[#22a574]" /></Slot>
        <Slot className="w-[40px]"><span className="h-4 w-4 bg-[#3291e8]" /></Slot>
        <Slot className="w-[34px]"><span className="h-4 w-[13px] bg-white" /></Slot>
        <Slot className="w-[40px] items-start"><span className="h-4 w-4 rounded-full border border-[#c98a35] bg-[#251b47]" /></Slot>
        <Slot className="w-[40px] items-start"><span className="h-4 w-4 rounded-full bg-[#e0503a]" /></Slot>
        <Slot className="w-[39px]"><span className="-mt-1 h-4 w-[20px] bg-[#74a80b]" /></Slot>
        <Slot className="w-[39px]"><span className="-mt-1 h-4 w-[20px] bg-[#ef6f45]" /></Slot>
      </div>
    </div>
    <span className="absolute top-[677px] left-[1114px] z-10 text-[11px] tracking-[-0.05em] whitespace-nowrap text-white">2:58 PM<span className="-ml-1 opacity-70">Udemy</span></span>

    <div className="absolute top-0 left-0 h-[136px] w-full bg-gradient-to-b from-[#14171c]/75 via-[#14171c]/25 to-transparent" />
    <div className="absolute top-[18px] left-[24px] font-['Inter',sans-serif] text-[24px] tracking-[-0.012em] whitespace-nowrap text-white">
      55. Flow procedure in achieving OAuth 2.0 Authentication mechanism
    </div>

    <div className="absolute top-[333px] left-[146px] z-20 h-[20px] w-[680px] border-2 border-[#1e6b45]" />
    <div className="absolute top-[350px] left-[823px] z-20 h-[5px] w-[5px] bg-[#1e6b45]" />
    <svg viewBox="0 0 707 33" className="absolute top-[332px] left-[137px] z-20 h-[33px] w-[707px] mix-blend-multiply" fill="#ffff00">
      <path d="M0 0H300V2H394V5H470V6H560V4H625V3H707V29H640V31H560V32H440V33H400V31H380V29H350V27H325V25H300V24H130V25H60V26H0Z" />
    </svg>
    <svg viewBox="0 0 13 13" className="absolute top-[310px] left-[433px] z-20 h-[14px] w-[14px]" fill="#fff" stroke="#111" strokeWidth="1.400">
      <path d="M4.500 1H8.500V4.500H12V8.500H8.500V12H4.500V8.500H1V4.500H4.500Z" />
    </svg>
    <div className="absolute top-[341px] left-0 z-30 flex h-[49px] w-[29px] items-center justify-center bg-[#2b2d30] text-white">
      <ChevronLeft className="h-6 w-6" strokeWidth={3} />
    </div>
    <div className="absolute top-[341px] right-0 z-30 flex h-[49px] w-[28px] items-center justify-center bg-[#2b2d30] text-white">
      <ChevronRight className="h-6 w-6" strokeWidth={3} />
    </div>
  </div>
);

/* ---------- Snipping Tool window ---------- */

const SnippingWindow = () => (
  <div className="absolute top-0 left-[88px] flex h-[1009px] w-[1706px] flex-col border border-[#646464] bg-white text-[18px] tracking-[-0.035em] text-black shadow-[0_4px_24px_rgba(0,0,0,0.5)]">
    <div className="flex h-11 items-center justify-between pl-2.5">
      <div className="flex items-center gap-[5px] tracking-[-0.013em]"><Scissors className="h-6 w-6" />Snipping Tool</div>
      <div className="flex h-full items-center">
        <Slot className="w-[69px]"><span className="h-px w-[15px] bg-black" /></Slot>
        <Slot className="w-[70px]"><span className="h-[15px] w-[15px] border border-black" /></Slot>
        <Slot className="w-[71px]">
          <svg viewBox="0 0 16 16" className="h-[15px] w-[15px]" stroke="#000" strokeWidth="1.200"><path d="M0 0L16 16M16 0L0 16" /></svg>
        </Slot>
      </div>
    </div>
    <div className="flex h-7 items-center pt-[4px] pl-[6px]">
      <span className="w-10">File</span><span className="w-[44px]">Edit</span><span className="w-[55px]">Tools</span><span>Help</span>
    </div>
    <div className="flex h-[57px] items-center border-b border-[#646464] bg-[#efefef] pl-[3px]">
      <Scissors className="h-[34px] w-[34px]" />
      <span className="w-[52px] pl-[4px]"><u className="decoration-1 underline-offset-4">N</u>ew</span>
      <div className="ml-[5px] flex h-6 w-8 items-center justify-center border border-[#0a6fc2] bg-[#0a96fb]"><span className="h-3 w-[18px] border border-dotted border-white bg-[#1181d6]" /></div>
      <span className="w-[69px] pl-[6px]"><u className="decoration-1 underline-offset-4">M</u>ode</span>
      <Caret className="h-[6px] w-3" />
      <span className="w-[17px]" />
      <Clock />
      <span className="w-[67px] pl-[7px]"><u className="decoration-1 underline-offset-4">D</u>elay</span>
      <Caret className="h-[6px] w-3" />
      <span className="w-[14px]" />
      <Floppy />
      <svg viewBox="0 0 28 31" className="ml-[19px] h-[31px] w-7" fill="#fff" stroke="#8a8a8a">
        <path d="M.500 .500H14.500L18.500 4.500V25.500H.500Z" />
        <path d="M3 7H9M3 11H9M3 15H9M3 19H9M3 23H9" stroke="#9fc3f2" />
        <path d="M9.500 4.500H23L27.500 9V30.500H9.500Z" /><path d="M23 4.500V9H27.500" />
        <path d="M12 11H25M12 14.500H25M12 18H25M12 21.500H25M12 25H25" stroke="#4a8fe8" />
      </svg>
      <svg viewBox="0 0 33 34" className="ml-5 h-[34px] w-[33px]" fill="none">
        <path d="M3 12L17 1L32 12V30H3Z" fill="#f5f5f5" stroke="#b8b8b8" />
        <path d="M3 12L17 20L32 12M3 30L13 18M32 30L21 18" stroke="#c3c3c3" />
        <ellipse cx="12" cy="26" rx="11.500" ry="6" fill="#f3f3f3" stroke="#e8393b" strokeWidth="1.600" transform="rotate(-20 12 26)" />
        <path d="M7 26L17 22M8 29L17 26" stroke="#888" />
      </svg>
      <span className="w-[18px]" />
      <Caret className="h-[6px] w-3" />
      <span className="ml-[8px] h-[46px] w-px bg-[#8a8a8a]" />
      <svg viewBox="0 0 34 34" className="ml-[14px] h-[34px] w-[34px]">
        <path d="M31 2L14 19L17 22L33 3Z" fill="#b9cdd6" stroke="#7d8f98" strokeWidth=".8" />
        <path d="M14 19L4 29L1 33L6 31L17 22Z" fill="#3a3a3a" />
      </svg>
      <span className="w-[17px]" />
      <Caret className="h-[6px] w-3" />
      <div className="ml-[7px] flex h-[49px] w-[47px] items-center justify-center border border-[#8fc6f3] bg-[#bfdaf0]">
        <svg viewBox="0 0 34 34" className="h-[34px] w-[34px]">
          <path d="M30 1L34 6L26 13L21 9Z" fill="#e6cf22" stroke="#a8961a" strokeWidth=".6" />
          <path d="M21 9L26 13L13 26L8 22Z" fill="#333" />
          <path d="M8 22L13 26L8 29L4 33L1 33L4 29Z" fill="#e3cb1c" stroke="#a8961a" strokeWidth=".6" />
        </svg>
      </div>
      <svg viewBox="0 0 33 20" className="ml-[5px] h-5 w-[33px]">
        <path d="M1 8L18 0L32 5L14 12Z" fill="#f0cbe0" /><path d="M1 8L14 12V20L1 15Z" fill="#d59cbd" /><path d="M14 12L32 5V13L14 20Z" fill="#e3b0cc" />
      </svg>
      <span className="ml-[11px] h-[46px] w-px bg-[#8a8a8a]" />
      <svg viewBox="0 0 20 28" className="ml-[17px] h-[29px] w-5">
        <defs>
          <linearGradient id="balloon" x1="1" y1="0" x2="0" y2="1">
            <stop offset="0" stopColor="#21b8f2" /><stop offset=".3" stopColor="#5b7be8" /><stop offset=".5" stopColor="#a84fd0" /><stop offset=".7" stopColor="#ea3a6e" /><stop offset="1" stopColor="#f9a51f" />
          </linearGradient>
        </defs>
        <path d="M10 0A10 10 0 0 1 20 10C20 16 14 19 9 26L6 28L6 23C3 19 0 16 0 10A10 10 0 0 1 10 0Z" fill="url(#balloon)" />
      </svg>
    </div>
    <div className="flex h-[853px]">
      <div className="flex w-[1678px] flex-col pl-[141px]">
        <div className="flex h-[147px] items-center pt-[55px] text-[19.500px]">
          <div className="flex w-[162px] justify-end overflow-hidden tracking-[-0.022em] whitespace-nowrap text-[#5a5a5a]"><span>to meet.google.com</span></div>
          <div className="ml-[26px] flex h-[57px] w-[161px] items-center justify-center rounded-[28px] bg-[#0b57d0] pr-0.5 font-semibold whitespace-nowrap text-white">Stop sharing</div>
          <div className="ml-3 flex h-[57px] w-[291px] items-center justify-center rounded-[28px] bg-[#d3e3fd] font-medium tracking-[-0.008em] whitespace-nowrap text-[#041e49]">View tab: meet.google.com</div>
        </div>
        <div className="h-[7px] w-[1397px] border-t border-[#5f8fd0] bg-[#18458a]" />
        <div className="flex h-[688px] w-[1397px] bg-[#323232]">
          <div className="w-[134px]" />
          <ExcelRecording />
        </div>
      </div>
      <div className="flex flex-1 flex-col items-center bg-[#efefef] text-[#5a5a5a]">
        <Slot className="h-[30px]! w-full"><ChevronUp className="h-[18px] w-[18px]" strokeWidth={3.5} /></Slot>
        <div className="mt-[208px] h-[353px] w-6 bg-[#cdcdcd]" />
        <div className="flex-1" />
        <Slot className="h-[28px]! w-full"><ChevronDown className="h-[18px] w-[18px]" strokeWidth={3.5} /></Slot>
      </div>
    </div>
    <div className="flex flex-1 items-center bg-[#efefef] text-[#5a5a5a]">
      <Slot className="w-[26px]"><ChevronLeft className="h-[18px] w-[18px]" strokeWidth={3.5} /></Slot>
      <div className="ml-[275px] h-full w-[1073px] bg-[#cdcdcd]" />
      <div className="flex-1" />
      <Slot className="mr-[26px] w-[28px]"><ChevronRight className="h-[18px] w-[18px]" strokeWidth={3.5} /></Slot>
    </div>
    <svg viewBox="0 0 12 12" className="absolute right-[3px] bottom-[3px] h-3 w-3" fill="#bdbdbd">
      <path d="M9 0H12V3H9ZM9 4.500H12V7.500H9ZM9 9H12V12H9ZM4.500 4.500H7.500V7.500H4.500ZM4.500 9H7.500V12H4.500ZM0 9H3V12H0Z" />
    </svg>
  </div>
);

/* ---------- Taskbar ---------- */

const Postman = () => (
  <svg viewBox="0 0 32 32" className="h-8 w-8" fill="none">
    <circle cx="16" cy="16" r="16" fill="#ff6c37" />
    <circle cx="23" cy="9" r="3" fill="#fff" />
    <path d="M20 11L11 19L7 26L13 22L20 17L22 13Z" fill="#fff" />
    <path d="M11 19L16 16M13 22L20 13" stroke="#ff6c37" strokeWidth=".8" />
  </svg>
);

const TaskItem = ({ children, className = "", open, active }: Kids & { open?: boolean; active?: boolean }) => (
  <div className={"flex h-full shrink-0 flex-col items-center " + className + (active ? " bg-[#eeeeee]" : "")}>
    <div className="flex flex-1 items-center">{children}</div>
    <div className={"h-[3px] " + (active ? "w-full bg-[#0078d7]" : open ? "w-[61px] bg-[#0078d7]" : "w-0")} />
  </div>
);

const Taskbar = () => (
  <div className="absolute top-[1020px] left-0 flex h-[60px] w-[1920px] items-center bg-[#d5d5d6] text-[18px] tracking-[-0.035em] text-black">
    <TaskItem className="w-[72px]">
      <svg viewBox="0 0 24 24" className="mt-[3px] h-6 w-6"><path d="M0 3.500L10 2V11.500H0ZM11 1.900L24 0V11.500H11ZM0 12.500H10V22L0 20.500ZM11 12.500H24V24L11 22.100Z" /></svg>
    </TaskItem>
    <TaskItem className="w-[71px]">
      <svg viewBox="0 0 33 33" className="mt-[2px] h-[33px] w-[33px]" fill="none" stroke="#000" strokeWidth="2.600"><circle cx="19.500" cy="13" r="11.800" /><path d="M11 21.500L1.500 32" strokeWidth="3.200" /></svg>
    </TaskItem>
    <TaskItem className="w-[74px]">
      <svg viewBox="0 0 24 24" className="mt-[2px] h-6 w-6" fill="none" stroke="#000" strokeWidth="1.300">
        <path d="M1 0V3.500H16V0M1 24V20.500H16V24M1 6.500H16V17.500H1ZM22.500 0V5M22.500 11V24" /><rect x="21.500" y="7" width="2" height="2" fill="#000" />
      </svg>
    </TaskItem>
    <TaskItem className="w-[79px]">
      <svg viewBox="0 0 36 36" className="mt-[2px] h-9 w-9">
        <defs>
          <linearGradient id="edgeTop" x1="0" y1="0" x2="1" y2=".6"><stop offset="0" stopColor="#1b9de2" /><stop offset=".5" stopColor="#35c1d8" /><stop offset="1" stopColor="#6fe040" /></linearGradient>
          <linearGradient id="edgeLow" x1="0" y1="0" x2="0" y2="1"><stop offset="0" stopColor="#1583d8" /><stop offset="1" stopColor="#0c59a4" /></linearGradient>
        </defs>
        <path d="M1 14C3 5 10 0 18 0C29 0 36 8 36 16C36 22 31 25 27 25C23 25 21 23 22 21C25 17 22 11 16 11C9 11 4 13 1 14Z" fill="url(#edgeTop)" />
        <path d="M1 14C6 8 17 8 20 14C14 14 12 20 13 24C15 31 24 33 33 27C29 33 24 36 18 36C7 36-1 26 1 14Z" fill="url(#edgeLow)" />
        <path d="M13 24C15 31 24 33 33 27C28 34 22 36 18 36C12 33 11 28 13 24Z" fill="#134b8d" />
      </svg>
    </TaskItem>
    <TaskItem className="w-[71px]">
      <svg viewBox="0 0 32 27" className="mt-[2px] h-[27px] w-8">
        <path d="M0 0H12L15 3V6H0Z" fill="#dc9d10" /><path d="M0 5H14L16 3H32V25H0Z" fill="#fdd15c" />
        <path d="M5 27V16Q5 14 7 14H25Q27 14 27 16V27H20V22H12V27Z" fill="#3b96dc" />
      </svg>
    </TaskItem>
    <TaskItem className="w-[79px]">
      <svg viewBox="0 0 36 36" className="mt-[2px] h-9 w-9">
        <path d="M10 8V2Q10 1 11 1H25Q26 1 26 2V8" fill="none" stroke="#20b3ef" strokeWidth="2" />
        <path d="M1 6H35V33Q35 36 32 36H4Q1 36 1 33Z" fill="#154a83" />
        <path d="M11 13H17.500V19.500H11Z" fill="#f25022" /><path d="M18.500 13H25V19.500H18.500Z" fill="#7fba00" /><path d="M11 20.500H17.500V27H11Z" fill="#00a4ef" /><path d="M18.500 20.500H25V27H18.500Z" fill="#ffb900" />
      </svg>
    </TaskItem>
    <TaskItem className="w-[72px]">
      <svg viewBox="0 0 32 34" className="mt-[2px] h-[34px] w-8">
        <defs>
          <linearGradient id="mA" x1="0" y1="0" x2="0" y2="1"><stop offset="0" stopColor="#a892e8" /><stop offset="1" stopColor="#3a52b8" /></linearGradient>
          <linearGradient id="mB" x1="0" y1="0" x2="1" y2="1"><stop offset="0" stopColor="#2a56b5" /><stop offset="1" stopColor="#4ad3f4" /></linearGradient>
          <linearGradient id="mC" x1="0" y1="0" x2="1" y2="0"><stop offset="0" stopColor="#c58cf5" /><stop offset="1" stopColor="#5d3a92" /></linearGradient>
        </defs>
        <path d="M13 1L3 7Q0 9 0 12V22Q0 25 3 26L10 29V14Q10 12 13 10L19 6Z" fill="url(#mA)" />
        <path d="M13 1Q16-1 20 1L29 7Q32 9 32 12V20L22 17V13Q22 11 19 10L13 8Z" fill="url(#mB)" />
        <path d="M32 17V22Q32 25 29 27L20 33Q16 35 12 33L7 29L12 26L22 20Z" fill="url(#mC)" />
      </svg>
    </TaskItem>
    <TaskItem className="w-[78px]" open>
      <svg viewBox="0 0 36 36" className="mt-[2px] h-9 w-9">
        <path d="M18 18L2.400 9A18 18 0 0 1 33.600 9H18Z" fill="#e33b2e" /><path d="M18 18L33.600 9A18 18 0 0 1 18 36L25.800 22.500Z" fill="#fbc116" />
        <path d="M18 18L25.800 22.500L18 36A18 18 0 0 1 2.400 9L10.200 22.500Z" fill="#229544" /><path d="M18 9H33.600L25.800 22.500Z" fill="#fbc116" />
        <circle cx="18" cy="18" r="8.500" fill="#fff" /><circle cx="18" cy="18" r="6.800" fill="#3079ee" />
      </svg>
    </TaskItem>
    <TaskItem className="w-[72px]">
      <svg viewBox="0 0 36 32" className="mt-[2px] h-8 w-9">
        <path d="M2 2Q2 0 4 0H32Q34 0 34 2V22H2Z" fill="#1291dc" /><path d="M0 22H36V24H0Z" fill="#0b5b9c" /><path d="M7 4H22V30H7Z" fill="#3fc8f4" /><path d="M7 4H22V7H7Z" fill="#1aa5e6" /><path d="M7 27H22V32H7Z" fill="#0b5b9c" />
      </svg>
    </TaskItem>
    <TaskItem className="w-[77px]">
      <svg viewBox="0 0 36 32" className="mt-[2px] h-8 w-9">
        <circle cx="16" cy="16" r="16" fill="#f7941e" /><circle cx="20" cy="16" r="16" fill="#2c2255" />
        <path d="M5 11.500H35M4 16H36M5 20.500H35" stroke="#fff" strokeWidth="2" />
      </svg>
    </TaskItem>
    <TaskItem className="w-[74px]"><Postman /></TaskItem>
    <TaskItem className="w-[76px]" open><Postman /></TaskItem>
    <TaskItem className="w-[75px]" open><Npp className="h-10 w-[34px]" /></TaskItem>
    <TaskItem className="w-[73px]" active><Scissors className="h-10 w-[34px]" /></TaskItem>
    <div className="flex-1" />
    <svg viewBox="0 0 18 10" className="h-[11px] w-[18px]" fill="none" stroke="#000" strokeWidth="1.400"><path d="M0 10L9 1L18 10" /></svg>
    <svg viewBox="0 0 18 24" className="ml-[18px] h-6 w-[18px]" fill="none" stroke="#000" strokeWidth="1.300">
      <path d="M1 6H11V18H1ZM11 10.500L16.500 7V17L11 13.500M3 2.500Q9-.500 14 2.500M3 21.500Q9 24.500 14 21.500" />
    </svg>
    <svg viewBox="0 0 25 22" className="ml-[13px] h-[22px] w-[25px]">
      <path d="M5 16A5 5 0 0 1 4 7A8 8 0 0 1 18 4A6 6 0 0 1 23 13L16 17Z" fill="#8f8f8f" stroke="#222" strokeWidth="1.300" />
      <circle cx="18" cy="15.500" r="6.500" fill="#fff" />
      <path d="M14 15A4 4 0 0 1 21.500 13.500M22 16A4 4 0 0 1 14.500 17.500M21.800 11V14H19M14 20V17H17" fill="none" stroke="#0a72d0" strokeWidth="1.500" />
    </svg>
    <svg viewBox="0 0 16 24" className="ml-[15px] h-6 w-4" fill="none" stroke="#000" strokeWidth="1.400"><rect x="3" y="0" width="10" height="18" rx="1.500" fill="#000" /><path d="M.700 11V20H15.300V11M8 20V23.500M4 23.300H12" /></svg>
    <svg viewBox="0 0 25 18" className="ml-[16px] h-[18px] w-[25px]" fill="none" stroke="#000" strokeWidth="1.300"><path d="M8 4.500H22.500V15H6V10M22.500 8H24.500V12H22.500M1.500 3V6.500Q4 10 7 6.500V3ZM2.500 0V3M6 0V3M4.300 9V15" /><path d="M10 6.500H18V13H10Z" fill="#000" /></svg>
    <svg viewBox="0 0 20 22" className="ml-[14px] h-[22px] w-5" fill="none" stroke="#000" strokeWidth="1.300"><path d="M1 20Q1 2 19 1M6 21Q6 8 19 6M11 21Q11 13 19 11.500" stroke="#333" /><circle cx="17" cy="19" r="1.800" fill="#000" /></svg>
    <svg viewBox="0 0 24 20" className="ml-[14px] h-5 w-6" fill="none" stroke="#000" strokeWidth="1.300"><path d="M1 7H4L9 2V18L4 13H1ZM13 7Q15 10 13 13M16.500 4.500Q20 10 16.500 15.500M19.500 2Q25 10 19.500 18" /></svg>
    <span className="ml-[16px] w-[42px] tracking-[-0.04em]">ENG</span>
    <div className="flex w-[116px] flex-col items-center pl-1 leading-[27px] tracking-[-0.01em]"><span>22:52</span><span>08-11-2023</span></div>
    <div className="relative mr-[56px] ml-[18px] flex h-full w-[6px] items-center">
      <svg viewBox="0 0 36 42" className="mt-1 h-[42px] w-9 shrink-0">
        <path d="M0 0H24V19H14V25L8 19H0Z" /><path d="M5 5.500H19M5 9.500H19M5 13.500H14" stroke="#fff" strokeWidth="1.400" />
        <circle cx="24" cy="25" r="11.500" fill="#cfcfcf" fillOpacity=".85" stroke="#555" />
        <text x="24" y="31" textAnchor="middle" className="font-['Open_Sans'] text-[16px] font-semibold">1</text>
      </svg>
    </div>
    <div className="absolute right-[6px] h-full w-px bg-[#a5a5a5]" />
  </div>
);

export default function App() {
  return (
    <div className="relative h-[1080px] w-[1920px] overflow-hidden bg-[#d5d5d6] font-['Open_Sans',sans-serif]">
      <NotepadWindow />
      <SnippingWindow />
      <Taskbar />
    </div>
  );
}
